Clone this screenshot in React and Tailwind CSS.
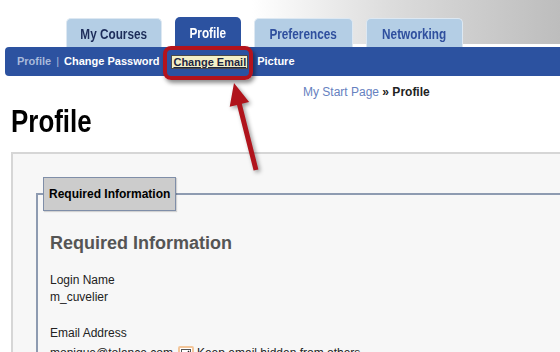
import React from "react";

const tabs = [
  { label: "My Courses", w: "w-[96px]", active: false, dark: true },
  { label: "Profile", w: "w-[66px]", active: true },
  { label: "Preferences", w: "w-[99px]", active: false },
  { label: "Networking", w: "w-[97px]", active: false },
];

const Tab = ({ label, w, active, dark }) => (
  <div
    className={
      active
        ? `${w} h-[30px] rounded-t-[5px] bg-[#2c52a0] text-white flex items-center justify-center`
        : `${w} h-[29px] rounded-t-[5px] bg-[#b4cee5] border border-b-0 border-[#dde8f2] flex items-center justify-center ${
            dark ? "text-[#1d2d5a]" : "text-[#2f4f9e]"
          }`
    }
  >
    <span className="inline-block scale-x-[0.84] whitespace-nowrap font-bold text-[14px] pt-[2px]">
      {label}
    </span>
  </div>
);

export default function App() {
  return (
    <div className="relative w-[560px] h-[352px] overflow-hidden bg-white font-['Liberation_Sans',Arial,sans-serif] flex flex-col">
      {/* ------------------------------- Header / tabs ------------------------------- */}
      <div className="h-[47px] shrink-0 bg-gradient-to-r from-white from-45% via-[#dcdcdc] via-70% to-[#bdbdbd] shadow-[inset_0_-3px_0_#ffffff] flex items-end pl-[66px] gap-[13px]">
        {tabs.map((t) => (
          <Tab key={t.label} {...t} />
        ))}
      </div>

      {/* ------------------------------- Sub nav ------------------------------- */}
      <div className="ml-[5px] h-[29px] shrink-0 bg-[#2c52a0] rounded-l-[4px] flex items-center pl-[12px] text-[11px] font-bold">
        <span className="text-[#a9badb]">Profile</span>
        <span className="text-[#a9badb] mx-[5px] font-normal">|</span>
        <span className="text-white">Change Password</span>
        <span className="ml-[12px] px-[1px] bg-[#f4f0c6] text-[#1d2440] underline border border-[#4a4a4a] leading-[12px]">
          Change Email
        </span>
        <span className="ml-[9px] text-white">Picture</span>
      </div>

      {/* ------------------------------- Breadcrumb ------------------------------- */}
      <div className="pl-[303px] pt-[9px] text-[12px] leading-[14px]">
        <span className="text-[#6681c0]">My Start Page</span>
        <span className="text-[#222] font-bold"> » Profile</span>
      </div>

      <h1 className="ml-[11px] mt-[4px] text-[32px] leading-[36px] font-bold text-black">
        <span className="inline-block scale-x-[0.81] origin-left">Profile</span>
      </h1>

      {/* ------------------------------- Content ------------------------------- */}
      <div className="mt-[13px] ml-[11px] flex-1 border-l-2 border-t-2 border-[#d6d6d6] bg-[#f7f7f7] pt-[23px] pl-[23px]">
        <fieldset className="border-2 border-r-0 border-[#8e9bb1] pl-[5px] h-[300px]">
          <legend className="px-[5px] border border-[#7f8ea8] bg-[#cccccc] text-[12px] leading-[32px] font-bold text-black shadow-[1px_1px_1px_rgba(0,0,0,0.15)]">
            Required Information
          </legend>
          <div className="pl-[7px] text-[12px] text-[#222]">
            <h2 className="mt-[21px] text-[18px] leading-[22px] font-bold text-[#555]">
              Required Information
            </h2>
            <div className="mt-[18px] leading-[17px]">
              <div>Login Name</div>
              <div>m_cuvelier</div>
            </div>
            <div className="mt-[19px] leading-[17px]">
              <div>Email Address</div>
              <div className="flex items-center mt-[3px]">
                <span>monique@tolance.com</span>
                <span className="ml-[5px] w-[16px] h-[16px] rounded-[2px] border-2 border-[#f3c69a] bg-white flex items-center justify-center">
                  <span className="w-[10px] h-[10px] border border-[#555] flex items-center justify-center">
                    <svg width="8" height="8" viewBox="0 0 8 8">
                      <path d="M1 4 L3 6.5 L7 1" fill="none" stroke="#222" strokeWidth="1.4" />
                    </svg>
                  </span>
                </span>
                <span className="ml-[3px]">Keep email hidden from others</span>
              </div>
            </div>
          </div>
        </fieldset>
      </div>

      {/* ------------------------------- Annotation ------------------------------- */}
      <div className="absolute left-[163px] top-[46px] w-[90px] h-[34px] border-4 border-[#b3131c] rounded-[8px] shadow-[2px_3px_4px_rgba(0,0,0,0.45)] pointer-events-none"></div>
      <svg
        className="absolute left-0 top-0 pointer-events-none drop-shadow-[2px_2px_2px_rgba(0,0,0,0.4)]"
        width="560"
        height="352"
        viewBox="0 0 560 352"
      >
        <polygon
          points="234,83 249.1,101.9 241.8,103.7 258.4,169.4 253.6,170.6 237,104.9 229.7,106.8"
          fill="#b0141c"
        />
      </svg>
    </div>
  );
}
